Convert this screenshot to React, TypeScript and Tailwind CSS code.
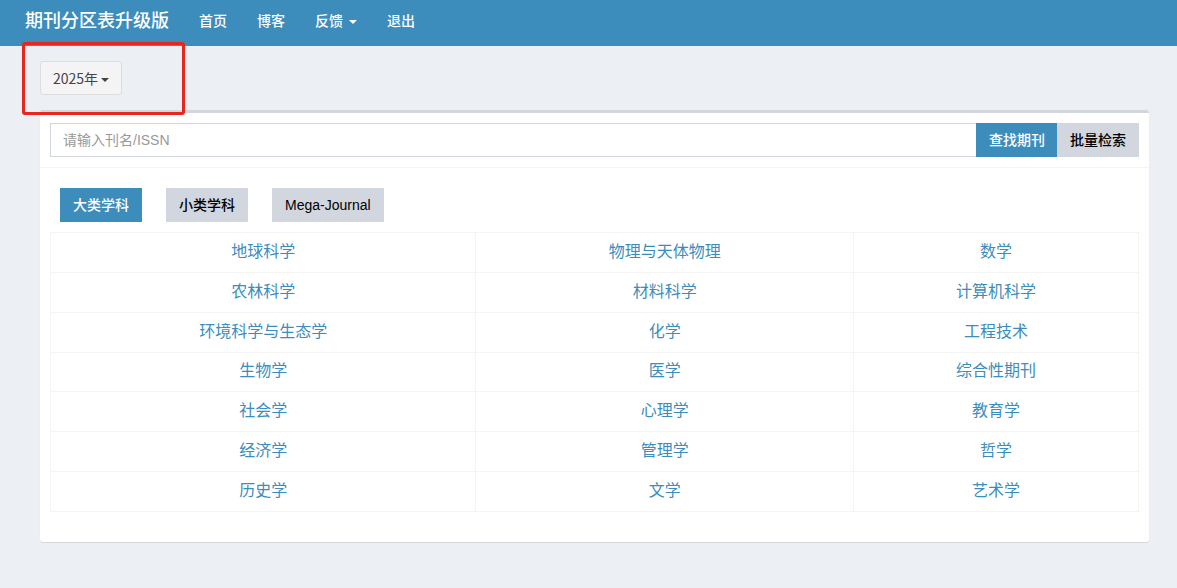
import React from 'react';
import clsx from 'clsx';

const subjects = [
  ['地球科学', '物理与天体物理', '数学'],
  ['农林科学', '材料科学', '计算机科学'],
  ['环境科学与生态学', '化学', '工程技术'],
  ['生物学', '医学', '综合性期刊'],
  ['社会学', '心理学', '教育学'],
  ['经济学', '管理学', '哲学'],
  ['历史学', '文学', '艺术学'],
];

const tabs = ['大类学科', '小类学科', 'Mega-Journal'];

const Caret: React.FC<{ className?: string }> = ({ className }) => (
  <span className={clsx('inline-block border-x-4 border-t-4 border-x-transparent border-t-current', className)} />
);

const Navbar: React.FC = () => (
  <header className="flex h-[46px] items-center bg-[#3c8dbc] pb-1 pl-[25px] font-medium text-white">
    <a href="#" className="mr-[30px] text-lg">期刊分区表升级版</a>
    <nav className="flex items-center gap-[30px] text-sm">
      <a href="#">首页</a>
      <a href="#">博客</a>
      <button type="button" className="flex items-center gap-1.5">反馈<Caret className="mt-0.5" /></button>
      <a href="#">退出</a>
    </nav>
  </header>
);

const SubjectTable: React.FC = () => (
  <table className="h-[280px] w-full table-fixed border-collapse text-center text-base leading-6">
    <colgroup>
      <col className="w-[39.1%]" />
      <col className="w-[34.7%]" />
      <col className="w-[26.2%]" />
    </colgroup>
    <tbody>
      {subjects.map((row) => (
        <tr key={row[0]}>
          {row.map((name) => (
            <td key={name} className="border border-[#f4f4f4] pb-px">
              <a href="#" className="text-[#3c8dbc]">{name}</a>
            </td>
          ))}
        </tr>
      ))}
    </tbody>
  </table>
);

export default function App() {
  return (
    <div className="min-h-screen bg-[#ecf0f5] font-['Liberation_Sans','Noto_Sans_CJK_SC',sans-serif]">
      <Navbar />

      <main className="pr-7 pb-11 pl-10">
        <div className="relative pt-[15px] pb-[15px]">
          <button
            type="button"
            className="flex h-[34px] items-center gap-[3px] rounded-[3px] border border-[#ddd] bg-[#f4f4f4] px-3 font-['Noto_Sans_CJK_SC',sans-serif] text-sm text-[#444]"
          >
            2025年<Caret className="mt-1" />
          </button>
          {/* highlight around the year picker */}
          <div className="pointer-events-none absolute -top-1 -left-[18px] h-[73px] w-[163px] rounded-[3px] border-3 border-[#e8251f]" />
        </div>

        <section className="rounded-[3px] border-t-3 border-[#d2d6de] bg-white shadow-[0_1px_1px_rgba(0,0,0,0.1)]">
          <form className="flex border-b border-[#f4f4f4] p-2.5 text-sm" onSubmit={(e) => e.preventDefault()}>
            <input
              type="text"
              aria-label="请输入刊名/ISSN"
              placeholder="请输入刊名/ISSN"
              className="h-[34px] min-w-0 flex-1 border border-r-0 border-[#d2d6de] bg-white px-3 outline-none placeholder:text-[#999]"
            />
            <button type="submit" className="-mr-px bg-[#3c8dbc] px-[13px] font-medium text-white">
              查找期刊
            </button>
            <button type="button" className="bg-[#d2d6de] px-[13px] font-medium text-black">批量检索</button>
          </form>

          <div className="px-2.5 pt-5 pb-[30px]">
            <div className="mb-2.5 flex gap-6 pl-2.5 text-sm">
              {tabs.map((tab, i) => (
                <button
                  key={tab}
                  type="button"
                  className={clsx(
                    'h-[34px] px-[13px] font-medium',
                    i === 0 ? 'bg-[#3c8dbc] text-white' : 'bg-[#d2d6de] text-black'
                  )}
                >
                  {tab}
                </button>
              ))}
            </div>
            <SubjectTable />
          </div>
        </section>
      </main>
    </div>
  );
}
